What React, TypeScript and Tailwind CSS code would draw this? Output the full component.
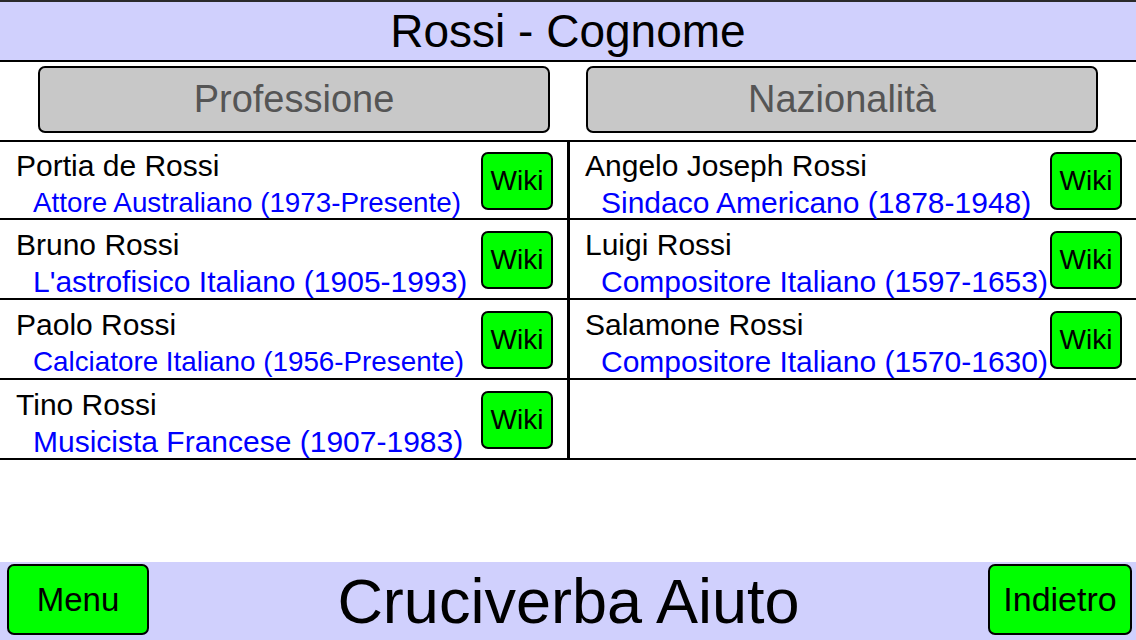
const left = [
  { name: "Portia de Rossi", desc: "Attore Australiano (1973-Presente)", small: true },
  { name: "Bruno Rossi", desc: "L'astrofisico Italiano (1905-1993)" },
  { name: "Paolo Rossi", desc: "Calciatore Italiano (1956-Presente)", small: true },
  { name: "Tino Rossi", desc: "Musicista Francese (1907-1983)" },
];

const right = [
  { name: "Angelo Joseph Rossi", desc: "Sindaco Americano (1878-1948)" },
  { name: "Luigi Rossi", desc: "Compositore Italiano (1597-1653)" },
  { name: "Salamone Rossi", desc: "Compositore Italiano (1570-1630)" },
];

type Person = { name: string; desc: string; small?: boolean };

function Row({ p, first, side }: { p?: Person; first: boolean; side: "l" | "r" }) {
  return (
    <div
      className={
        "flex items-start justify-between border-b-2 border-black " +
        (side === "l" ? "pl-[16px] pr-[14px] " : "pl-[15px] pr-[14px] ") +
        (first ? "h-[78px] pt-[10px]" : "h-[80px] pt-[11px]")
      }
    >
      {p && (
        <>
          <div className="flex flex-col whitespace-nowrap min-w-0">
            <span className="text-[30px] leading-[30px] text-black -mt-[1px]">{p.name}</span>
            <span
              className={
                "leading-[30px] text-[#0000ff] mt-[7px] " +
                (side === "l" ? "pl-[17px] " : "pl-[16px] ") +
                (p.small ? "text-[27.8px]" : "text-[30px]")
              }
            >
              {p.desc}
            </span>
          </div>
          <button className="shrink-0 w-[72px] h-[58px] rounded-[7px] border-2 border-black bg-[#00ff00] text-[28px] text-black flex items-center justify-center">
            Wiki
          </button>
        </>
      )}
    </div>
  );
}

export default function App() {
  return (
    <div className="w-[1136px] h-[640px] flex flex-col bg-white overflow-hidden font-['Liberation_Sans',Arial,sans-serif]">
      <div className="h-[2px] bg-[#2a2a2a]" />
      <header className="h-[60px] bg-[#d0d0fd] border-b-2 border-black flex items-center justify-center text-[46px] text-black">
        Rossi - Cognome
      </header>

      <div className="h-[80px] border-b-2 border-black flex items-start gap-[36px] px-[38px] pt-[4px]">
        <button className="flex-1 h-[67px] rounded-[7px] border-2 border-black bg-[#c8c8c8] text-[#555555] text-[38px] flex items-center justify-center">
          Professione
        </button>
        <button className="flex-1 h-[67px] rounded-[7px] border-2 border-black bg-[#c8c8c8] text-[#555555] text-[38px] flex items-center justify-center">
          Nazionalità
        </button>
      </div>

      <div className="flex">
        <div className="w-[567px] flex flex-col">
          {left.map((p, i) => (
            <Row key={p.name} p={p} first={i === 0} side="l" />
          ))}
        </div>
        <div className="w-[3px] bg-black" />
        <div className="flex-1 flex flex-col">
          {[0, 1, 2, 3].map((i) => (
            <Row key={i} p={right[i]} first={i === 0} side="r" />
          ))}
        </div>
      </div>

      <div className="flex-1" />

      <footer className="h-[78px] bg-[#d0d0fd] flex items-start pl-[7px] pr-[4px] pt-[2px]">
        <button className="w-[142px] h-[71px] rounded-[7px] border-2 border-black bg-[#00ff00] text-[33px] text-black flex items-center justify-center">
          Menu
        </button>
        <div className="flex-1 h-[74px] flex items-center justify-center text-[63px] text-black">
          Cruciverba Aiuto
        </div>
        <button className="w-[144px] h-[71px] rounded-[7px] border-2 border-black bg-[#00ff00] text-[34px] text-black flex items-center justify-center">
          Indietro
        </button>
      </footer>
    </div>
  );
}
